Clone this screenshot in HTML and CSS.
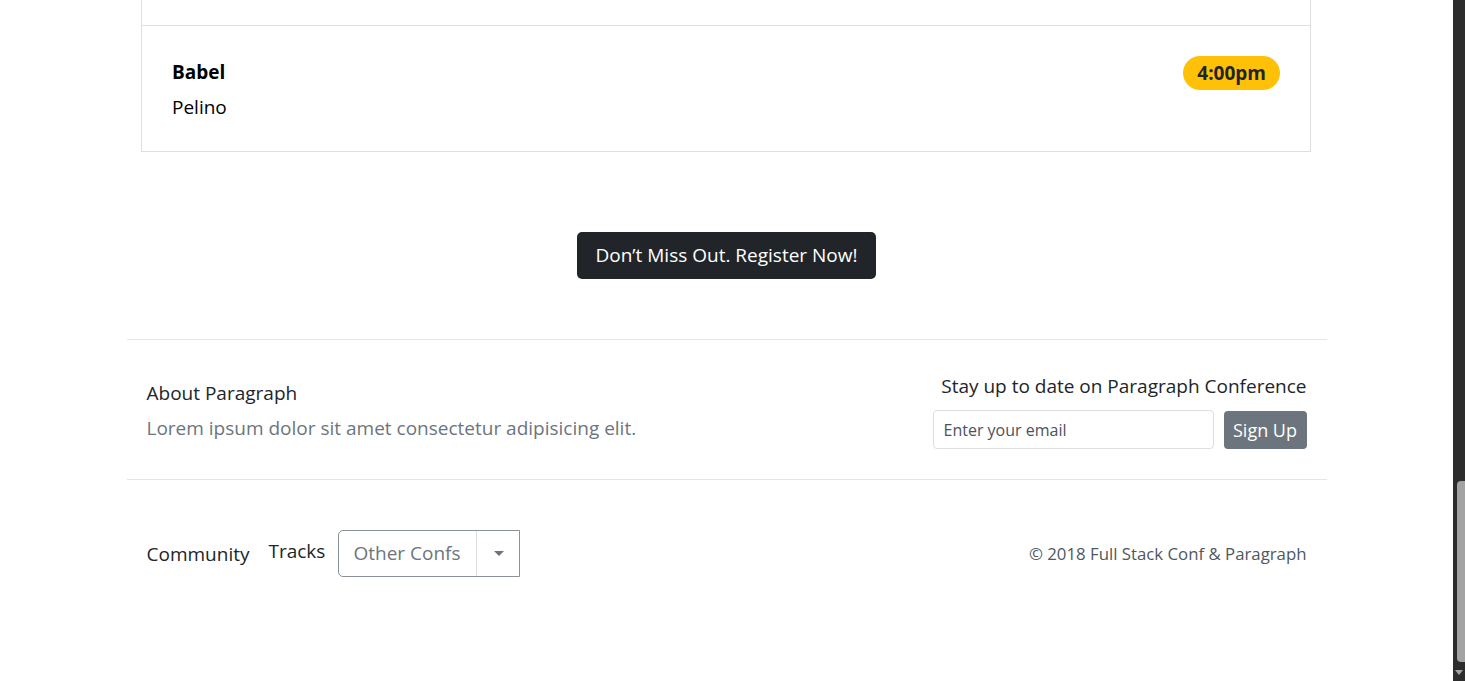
FILE: index.html
```html
<!DOCTYPE html>
<html lang="en">
<head>
<meta charset="utf-8">
<title>Paragraph Conference</title>
<link rel="stylesheet" href="styles.css">
</head>
<body>
<div class="frame">
  <main class="page">
    <section class="schedule">
      <div class="item item-prev"></div>
      <div class="item">
        <div class="talk">
          <div class="talk-title">Babel</div>
          <div class="talk-speaker">Pelino</div>
        </div>
        <span class="badge">4:00pm</span>
      </div>
    </section>

    <div class="cta">
      <a class="btn-dark" href="#">Don’t Miss Out. Register Now!</a>
    </div>

    <footer class="footer">
      <div class="footer-top">
        <div class="about">
          <div class="about-title">About Paragraph</div>
          <div class="about-text">Lorem ipsum dolor sit amet consectetur adipisicing elit.</div>
        </div>
        <div class="signup">
          <div class="signup-title">Stay up to date on Paragraph Conference</div>
          <form class="signup-form">
            <input class="email" type="text" placeholder="Enter your email">
            <button class="btn-secondary" type="button">Sign Up</button>
          </form>
        </div>
      </div>
      <div class="footer-bottom">
        <nav class="links">
          <a class="link link-community" href="#">Community</a>
          <a class="link link-tracks" href="#">Tracks</a>
          <div class="dropdown">
            <span class="dropdown-label">Other Confs</span>
            <span class="dropdown-toggle"><span class="caret"></span></span>
          </div>
        </nav>
        <div class="copyright">© 2018 Full Stack Conf &amp; Paragraph</div>
      </div>
    </footer>
  </main>
  <div class="scrollbar">
    <div class="scroll-space"></div>
    <div class="scroll-thumb"></div>
    <div class="scroll-arrow"></div>
  </div>
</div>
</body>
</html>
```

FILE: styles.css
```css
html, body {
  margin: 0;
  padding: 0;
  height: 100%;
  overflow: hidden;
}

body {
  font-family: "Open Sans", "Noto Sans", "Liberation Sans", sans-serif;
  color: #212529;
  background: #fff;
}

.frame {
  display: flex;
  height: 681px;
}

.page {
  flex: 1;
  display: flex;
  flex-direction: column;
  align-items: center;
}

.schedule {
  width: 1170px;
  margin-right: 1px;
  display: flex;
  flex-direction: column;
}

.item {
  border: 1px solid #dfdfdf;
  border-top: none;
  padding: 31px 30px 29px 30px;
  display: flex;
  justify-content: space-between;
  align-items: flex-start;
}

.item-prev {
  height: 25px;
  padding: 0;
}

.talk-title {
  font-weight: 700;
  font-size: 19px;
  line-height: 30px;
  color: #000;
}

.talk-speaker {
  font-size: 19px;
  line-height: 30px;
  margin-top: 5px;
  color: #000;
}

.badge {
  background: #ffc107;
  color: #212529;
  font-weight: 700;
  font-size: 19px;
  line-height: 34px;
  height: 34px;
  padding: 0 14px;
  border-radius: 17px;
  margin-top: -1px;
}

.cta {
  margin-top: 80px;
  display: flex;
  justify-content: center;
}

.btn-dark {
  display: block;
  background: #212529;
  color: #fff;
  text-decoration: none;
  font-size: 19px;
  line-height: 47px;
  height: 47px;
  padding: 0 18px;
  border-radius: 5px;
}

.footer {
  width: 1200px;
  margin-top: 60px;
}

.footer-top {
  border-top: 1px solid #e5e5e5;
  border-bottom: 1px solid #e5e5e5;
  height: 139px;
  padding: 0 20px;
  display: flex;
  justify-content: space-between;
  align-items: flex-start;
}

.about {
  padding-top: 38px;
}

.about-title {
  font-size: 19px;
  line-height: 30px;
  color: #212529;
}

.about-text {
  font-size: 19px;
  line-height: 30px;
  margin-top: 5px;
  color: #6c757d;
}

.signup {
  padding-top: 31px;
  display: flex;
  flex-direction: column;
  align-items: flex-end;
}

.signup-title {
  font-size: 19px;
  line-height: 30px;
  color: #212529;
}

.signup-form {
  margin: 10px 0 0 0;
  display: flex;
  gap: 10px;
}

.email {
  width: 281px;
  height: 39px;
  box-sizing: border-box;
  border: 1px solid #dcdee2;
  border-radius: 4px;
  padding: 0 10px;
  font-family: inherit;
  font-size: 16px;
  color: #495057;
  margin-top: -1px;
}

.email::placeholder {
  color: #4d5259;
}

.btn-secondary {
  width: 83px;
  height: 38px;
  border: none;
  border-radius: 4px;
  background: #6c757d;
  color: #fff;
  font-family: inherit;
  font-size: 18px;
  padding: 0;
}

.footer-bottom {
  padding: 50px 20px 0 20px;
  display: flex;
  justify-content: space-between;
  align-items: center;
}

.links {
  display: flex;
  align-items: center;
}

.link {
  color: #212529;
  text-decoration: none;
  font-size: 19px;
  line-height: 30px;
}

.link-community {
  margin-right: 19px;
}

.link-tracks {
  margin-right: 13px;
  position: relative;
  top: -3px;
}

.dropdown {
  display: flex;
  height: 47px;
  box-sizing: border-box;
  border: 1px solid #8c9299;
  border-radius: 5px 0 0 5px;
}

.dropdown-label {
  width: 137px;
  box-sizing: border-box;
  padding-left: 14px;
  line-height: 45px;
  font-size: 19px;
  color: #6c757d;
}

.dropdown-toggle {
  width: 42px;
  display: flex;
  align-items: center;
  justify-content: center;
  border-left: 1px solid #dcdee0;
  background: #fff;
}

.caret {
  width: 0;
  height: 0;
  border-left: 5px solid transparent;
  border-right: 5px solid transparent;
  border-top: 5px solid #6c757d;
  margin-left: 1px;
}

.copyright {
  font-size: 16.8px;
  line-height: 30px;
  color: #50575e;
}

.scrollbar {
  width: 12px;
  background: #2d2d2d;
  display: flex;
  flex-direction: column;
  align-items: flex-end;
}

.scroll-space {
  height: 481px;
}

.scroll-thumb {
  width: 8px;
  height: 181px;
  background: #a3a3a3;
  border-radius: 4px 0 0 4px;
}

.scroll-arrow {
  margin-top: 8px;
  width: 0;
  height: 0;
  border-left: 4px solid transparent;
  border-right: 4px solid transparent;
  border-top: 5px solid #a3a3a3;
  align-self: center;
}
```
